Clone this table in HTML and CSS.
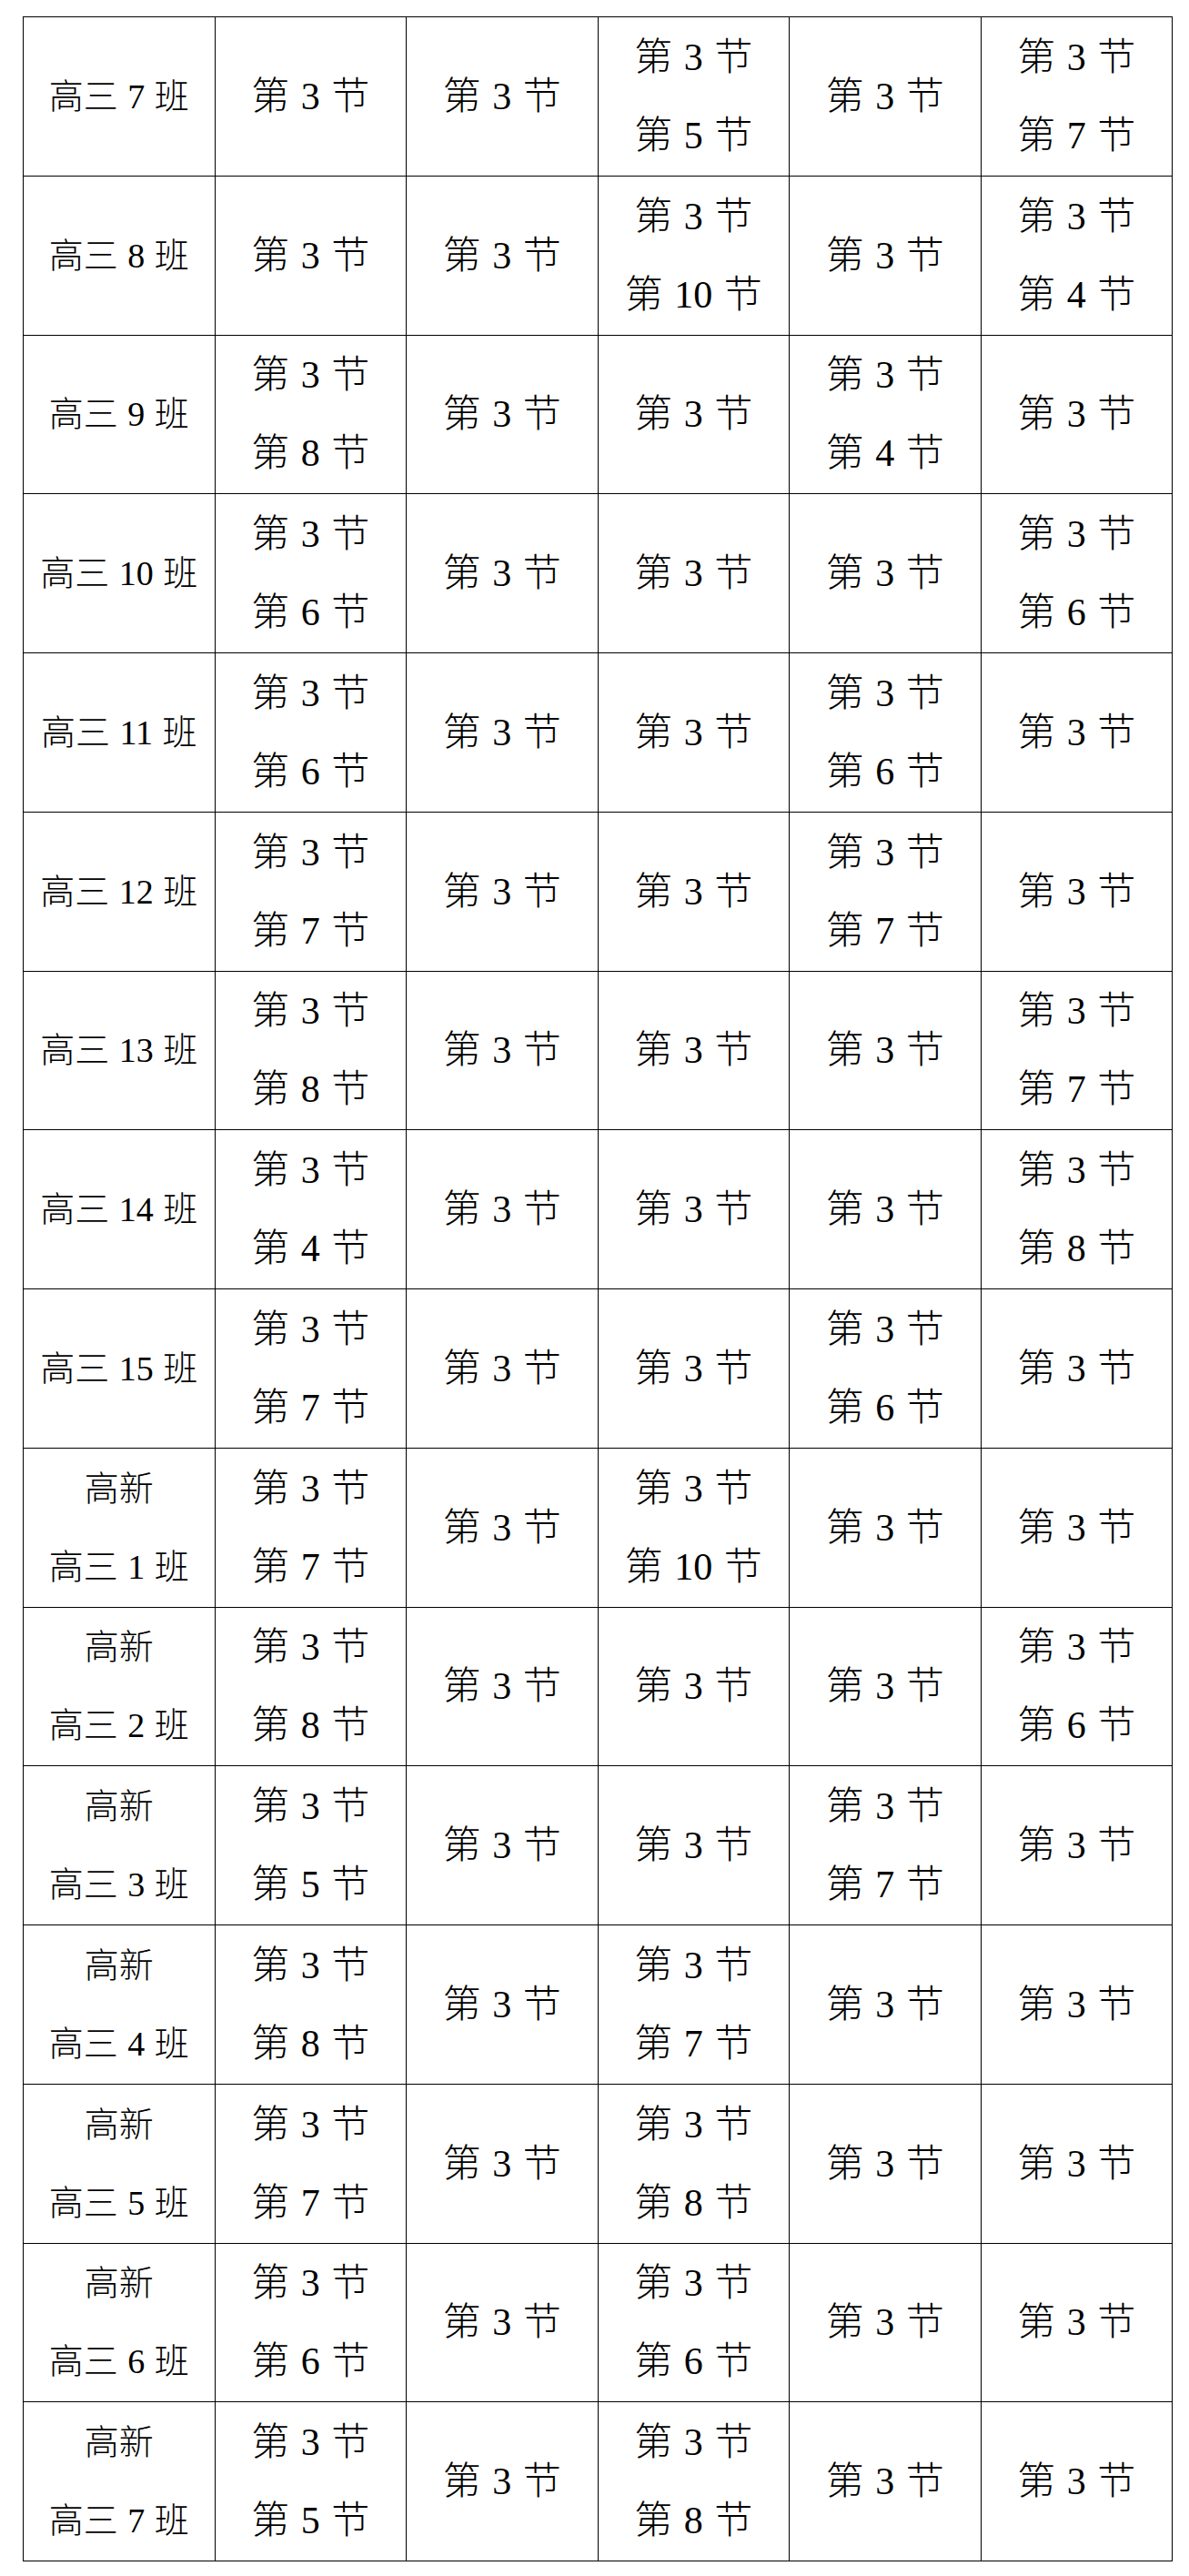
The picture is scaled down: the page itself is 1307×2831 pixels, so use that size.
FILE: index.html
```html
<!DOCTYPE html>
<html lang="zh-CN">
<head>
<meta charset="utf-8">
<title>课表</title>
<link rel="stylesheet" href="styles.css">
</head>
<body>
<div class="sheet">
  <div class="cell name">高三 7 班</div><div class="cell">第 3 节</div><div class="cell">第 3 节</div><div class="cell">第 3 节<br>第 5 节</div><div class="cell">第 3 节</div><div class="cell">第 3 节<br>第 7 节</div>
  <div class="cell name">高三 8 班</div><div class="cell">第 3 节</div><div class="cell">第 3 节</div><div class="cell">第 3 节<br>第 10 节</div><div class="cell">第 3 节</div><div class="cell">第 3 节<br>第 4 节</div>
  <div class="cell name">高三 9 班</div><div class="cell">第 3 节<br>第 8 节</div><div class="cell">第 3 节</div><div class="cell">第 3 节</div><div class="cell">第 3 节<br>第 4 节</div><div class="cell">第 3 节</div>
  <div class="cell name">高三 10 班</div><div class="cell">第 3 节<br>第 6 节</div><div class="cell">第 3 节</div><div class="cell">第 3 节</div><div class="cell">第 3 节</div><div class="cell">第 3 节<br>第 6 节</div>
  <div class="cell name">高三 11 班</div><div class="cell">第 3 节<br>第 6 节</div><div class="cell">第 3 节</div><div class="cell">第 3 节</div><div class="cell">第 3 节<br>第 6 节</div><div class="cell">第 3 节</div>
  <div class="cell name">高三 12 班</div><div class="cell">第 3 节<br>第 7 节</div><div class="cell">第 3 节</div><div class="cell">第 3 节</div><div class="cell">第 3 节<br>第 7 节</div><div class="cell">第 3 节</div>
  <div class="cell name">高三 13 班</div><div class="cell">第 3 节<br>第 8 节</div><div class="cell">第 3 节</div><div class="cell">第 3 节</div><div class="cell">第 3 节</div><div class="cell">第 3 节<br>第 7 节</div>
  <div class="cell name">高三 14 班</div><div class="cell">第 3 节<br>第 4 节</div><div class="cell">第 3 节</div><div class="cell">第 3 节</div><div class="cell">第 3 节</div><div class="cell">第 3 节<br>第 8 节</div>
  <div class="cell name">高三 15 班</div><div class="cell">第 3 节<br>第 7 节</div><div class="cell">第 3 节</div><div class="cell">第 3 节</div><div class="cell">第 3 节<br>第 6 节</div><div class="cell">第 3 节</div>
  <div class="cell name">高新<br>高三 1 班</div><div class="cell">第 3 节<br>第 7 节</div><div class="cell">第 3 节</div><div class="cell">第 3 节<br>第 10 节</div><div class="cell">第 3 节</div><div class="cell">第 3 节</div>
  <div class="cell name">高新<br>高三 2 班</div><div class="cell">第 3 节<br>第 8 节</div><div class="cell">第 3 节</div><div class="cell">第 3 节</div><div class="cell">第 3 节</div><div class="cell">第 3 节<br>第 6 节</div>
  <div class="cell name">高新<br>高三 3 班</div><div class="cell">第 3 节<br>第 5 节</div><div class="cell">第 3 节</div><div class="cell">第 3 节</div><div class="cell">第 3 节<br>第 7 节</div><div class="cell">第 3 节</div>
  <div class="cell name">高新<br>高三 4 班</div><div class="cell">第 3 节<br>第 8 节</div><div class="cell">第 3 节</div><div class="cell">第 3 节<br>第 7 节</div><div class="cell">第 3 节</div><div class="cell">第 3 节</div>
  <div class="cell name">高新<br>高三 5 班</div><div class="cell">第 3 节<br>第 7 节</div><div class="cell">第 3 节</div><div class="cell">第 3 节<br>第 8 节</div><div class="cell">第 3 节</div><div class="cell">第 3 节</div>
  <div class="cell name">高新<br>高三 6 班</div><div class="cell">第 3 节<br>第 6 节</div><div class="cell">第 3 节</div><div class="cell">第 3 节<br>第 6 节</div><div class="cell">第 3 节</div><div class="cell">第 3 节</div>
  <div class="cell name">高新<br>高三 7 班</div><div class="cell">第 3 节<br>第 5 节</div><div class="cell">第 3 节</div><div class="cell">第 3 节<br>第 8 节</div><div class="cell">第 3 节</div><div class="cell">第 3 节</div>
</div>
</body>
</html>
```
FILE: styles.css
```css
html, body {
  margin: 0;
  padding: 0;
  background: #ffffff;
}

body {
  padding: 18px 0 0 25px;
  font-family: "Liberation Serif", "Noto Sans CJK SC", serif;
  color: #000000;
}

.sheet {
  display: grid;
  grid-template-columns: repeat(6, 1fr);
  grid-auto-rows: 174.75px;
  width: 1264px;
  border-top: 1.5px solid #000;
  border-left: 1.5px solid #000;
  box-sizing: border-box;
}

.cell {
  display: flex;
  align-items: center;
  justify-content: center;
  text-align: center;
  border-right: 1.5px solid #000;
  border-bottom: 1.5px solid #000;
  font-size: 42px;
  font-weight: 300;
  line-height: 86px;
  word-spacing: 2px;
  white-space: nowrap;
}

.name {
  font-size: 38px;
  word-spacing: 1px;
}
```
